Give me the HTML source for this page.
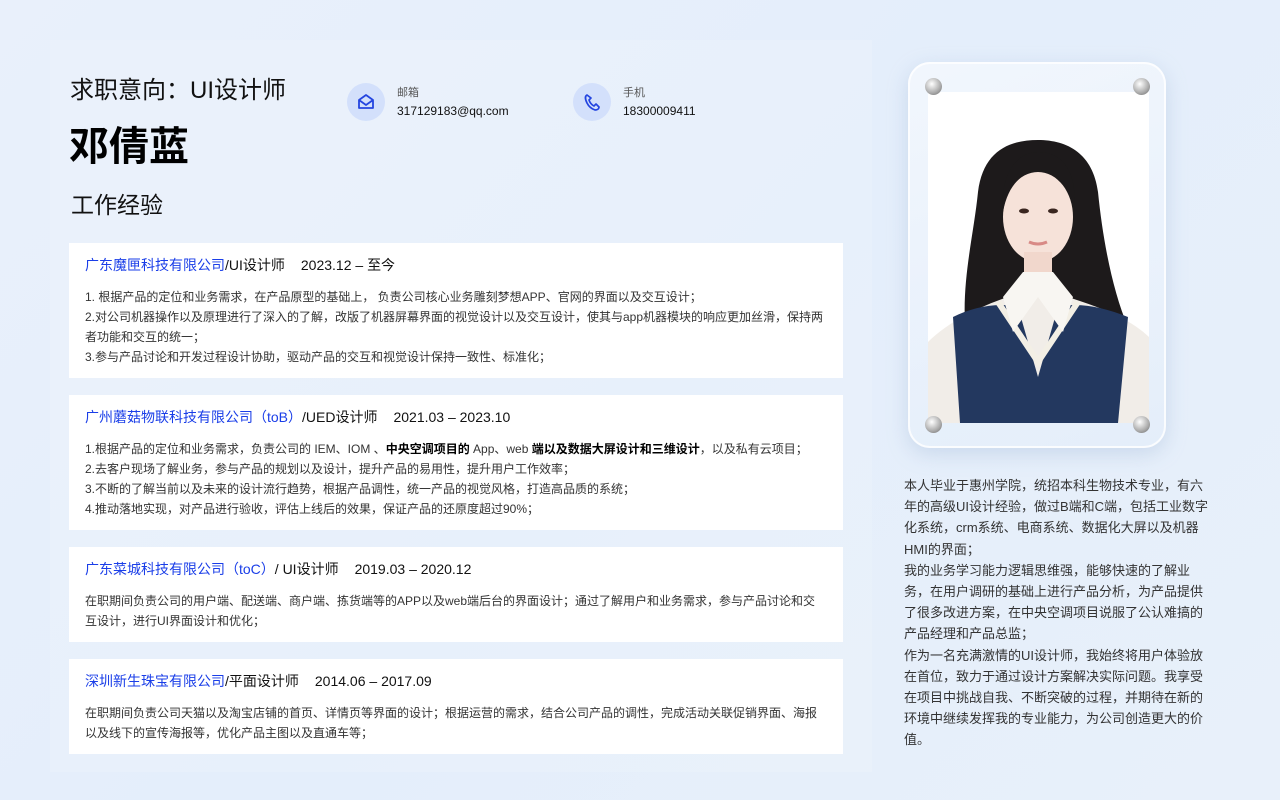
<!DOCTYPE html>
<html><head><meta charset="utf-8"><style>
*{margin:0;padding:0;box-sizing:border-box}
body{width:1280px;height:800px;overflow:hidden;background:linear-gradient(135deg,#e9f0fb 0%,#e4eefb 50%,#e8f0fa 100%);font-family:"Liberation Sans","Noto Sans CJK SC",sans-serif;color:#222;position:relative}
.panel{position:absolute;left:50px;top:40px;width:822px;height:732px;background:rgba(255,255,255,0.12)}
.abs{position:absolute;white-space:nowrap}
.card{position:absolute;left:69px;width:774px;background:#fff;padding:0 16px}
.card h3{font-weight:normal;font-size:14px;color:#111;height:20px;line-height:20px;margin-top:12px}
.card h3 b{font-weight:normal;color:#1a3ee8}
.card h3 span{margin-left:16px}
.card p{font-size:12px;line-height:20px;color:#333;margin-top:12px;white-space:nowrap}
.ic{position:absolute;width:38px;height:38px;border-radius:50%;background:#d3e0fb}
.right{position:absolute;left:904px;top:475px;font-size:13px;line-height:21.2px;color:#333;white-space:nowrap}
</style></head><body>
<div class="panel"></div>
<div class="abs" style="left:70px;top:70px;font-size:24px;color:#111">求职意向：UI设计师</div>
<div class="abs" style="left:69px;top:114px;font-size:40px;font-weight:bold;color:#000">邓倩蓝</div>
<div class="abs" style="left:71px;top:186px;font-size:23px;color:#111">工作经验</div>

<div class="ic" style="left:347px;top:83px"><svg width="38" height="38" viewBox="0 0 38 38"><path d="M12 17 L19 12 L26 17 V25 H12 Z M12 17 L19 22 L26 17" fill="none" stroke="#2445e0" stroke-width="1.8" stroke-linejoin="round"/></svg></div>
<div class="abs" style="left:397px;top:84px;font-size:11px;color:#555">邮箱</div>
<div class="abs" style="left:397px;top:104px;font-size:12px;color:#111">317129183@qq.com</div>
<div class="ic" style="left:573px;top:83px"><svg width="38" height="38" viewBox="0 0 38 38"><path d="M14 12 C12 13 12 16 14 20 C16 24 19 26 22 27 C24 27 26 26 26 24 L23 21 L21 23 C19 22 17 20 16 17 L18 15 Z" fill="none" stroke="#2445e0" stroke-width="1.7" stroke-linejoin="round"/></svg></div>
<div class="abs" style="left:623px;top:84px;font-size:11px;color:#555">手机</div>
<div class="abs" style="left:623px;top:104px;font-size:12px;color:#111">18300009411</div>

<div class="card" style="top:243px;height:135px"><h3><b>广东魔匣科技有限公司</b>/UI设计师<span>2023.12 – 至今</span></h3>
<p>1. 根据产品的定位和业务需求，在产品原型的基础上， 负责公司核心业务雕刻梦想APP、官网的界面以及交互设计；<br>2.对公司机器操作以及原理进行了深入的了解，改版了机器屏幕界面的视觉设计以及交互设计，使其与app机器模块的响应更加丝滑，保持两<br>者功能和交互的统一；<br>3.参与产品讨论和开发过程设计协助，驱动产品的交互和视觉设计保持一致性、标准化；</p></div>
<div class="card" style="top:395px;height:135px"><h3><b>广州蘑菇物联科技有限公司（toB）</b>/UED设计师<span>2021.03 – 2023.10</span></h3>
<p>1.根据产品的定位和业务需求，负责公司的 IEM、IOM 、<span style="color:#000;font-weight:bold">中央空调项目的</span> App、web  <span style="color:#000;font-weight:bold">端以及数据大屏设计和三维设计</span>，以及私有云项目；<br>2.去客户现场了解业务，参与产品的规划以及设计，提升产品的易用性，提升用户工作效率；<br>3.不断的了解当前以及未来的设计流行趋势，根据产品调性，统一产品的视觉风格，打造高品质的系统；<br>4.推动落地实现，对产品进行验收，评估上线后的效果，保证产品的还原度超过90%；</p></div>
<div class="card" style="top:547px;height:95px"><h3><b>广东菜城科技有限公司（toC）</b>/ UI设计师<span>2019.03 – 2020.12</span></h3>
<p>在职期间负责公司的用户端、配送端、商户端、拣货端等的APP以及web端后台的界面设计；通过了解用户和业务需求，参与产品讨论和交<br>互设计，进行UI界面设计和优化；</p></div>
<div class="card" style="top:659px;height:95px"><h3><b>深圳新生珠宝有限公司</b>/平面设计师<span>2014.06 – 2017.09</span></h3>
<p>在职期间负责公司天猫以及淘宝店铺的首页、详情页等界面的设计；根据运营的需求，结合公司产品的调性，完成活动关联促销界面、海报<br>以及线下的宣传海报等，优化产品主图以及直通车等；</p></div>

<!-- photo frame -->
<div style="position:absolute;left:908px;top:62px;width:258px;height:386px;border-radius:22px;background:linear-gradient(160deg,rgba(255,255,255,0.5),rgba(225,236,250,0.4));box-shadow:0 6px 20px rgba(150,175,210,0.35),inset 0 0 0 2px rgba(255,255,255,0.8)"></div>
<svg style="position:absolute;left:928px;top:92px" width="221" height="331" viewBox="0 0 221 331">
<rect width="221" height="331" fill="#fff"/>
<path d="M40 260 C30 200 45 150 50 100 C55 60 80 48 110 48 C140 48 165 62 170 100 C175 150 185 200 200 235 L180 250 L40 260Z" fill="#1d1a1b"/>
<path d="M0 250 C20 230 50 215 80 205 L140 205 C170 215 200 225 221 245 L221 331 L0 331Z" fill="#f1ede8"/>
<path d="M25 225 C45 215 70 210 90 215 L110 285 L130 215 C150 210 175 215 200 225 L190 331 L32 331Z" fill="#23385f"/>
<path d="M70 210 L110 270 L150 210" fill="none" stroke="#f3efe5" stroke-width="6"/>
<ellipse cx="110" cy="125" rx="35" ry="45" fill="#f6e2d9"/>
<rect x="96" y="160" width="28" height="45" fill="#f1d7cc"/>
<path d="M75 120 C72 80 90 60 110 60 C135 60 150 80 146 120 C140 90 125 80 110 78 C95 80 80 92 75 120Z" fill="#1d1a1b"/>
<path d="M95 180 L75 205 L85 240 L110 205 L135 240 L145 205 L125 180Z" fill="#f8f6f2"/>
<ellipse cx="96" cy="119" rx="5" ry="2.5" fill="#3a2620"/><ellipse cx="125" cy="119" rx="5" ry="2.5" fill="#3a2620"/>
<path d="M101 150 Q110 154 119 150" stroke="#d88a86" stroke-width="3" fill="none"/>
</svg>
<div style="position:absolute;left:925px;top:78px;width:17px;height:17px;border-radius:50%;background:radial-gradient(circle at 40% 35%,#fff,#aaa 60%,#666);"></div>
<div style="position:absolute;left:1133px;top:78px;width:17px;height:17px;border-radius:50%;background:radial-gradient(circle at 40% 35%,#fff,#aaa 60%,#666);"></div>
<div style="position:absolute;left:925px;top:416px;width:17px;height:17px;border-radius:50%;background:radial-gradient(circle at 40% 35%,#fff,#aaa 60%,#666);"></div>
<div style="position:absolute;left:1133px;top:416px;width:17px;height:17px;border-radius:50%;background:radial-gradient(circle at 40% 35%,#fff,#aaa 60%,#666);"></div>

<div class="right">本人毕业于惠州学院，统招本科生物技术专业，有六<br>年的高级UI设计经验，做过B端和C端，包括工业数字<br>化系统，crm系统、电商系统、数据化大屏以及机器<br>HMI的界面；<br>我的业务学习能力逻辑思维强，能够快速的了解业<br>务，在用户调研的基础上进行产品分析，为产品提供<br>了很多改进方案，在中央空调项目说服了公认难搞的<br>产品经理和产品总监；<br>作为一名充满激情的UI设计师，我始终将用户体验放<br>在首位，致力于通过设计方案解决实际问题。我享受<br>在项目中挑战自我、不断突破的过程，并期待在新的<br>环境中继续发挥我的专业能力，为公司创造更大的价<br>值。</div>
</body></html>
